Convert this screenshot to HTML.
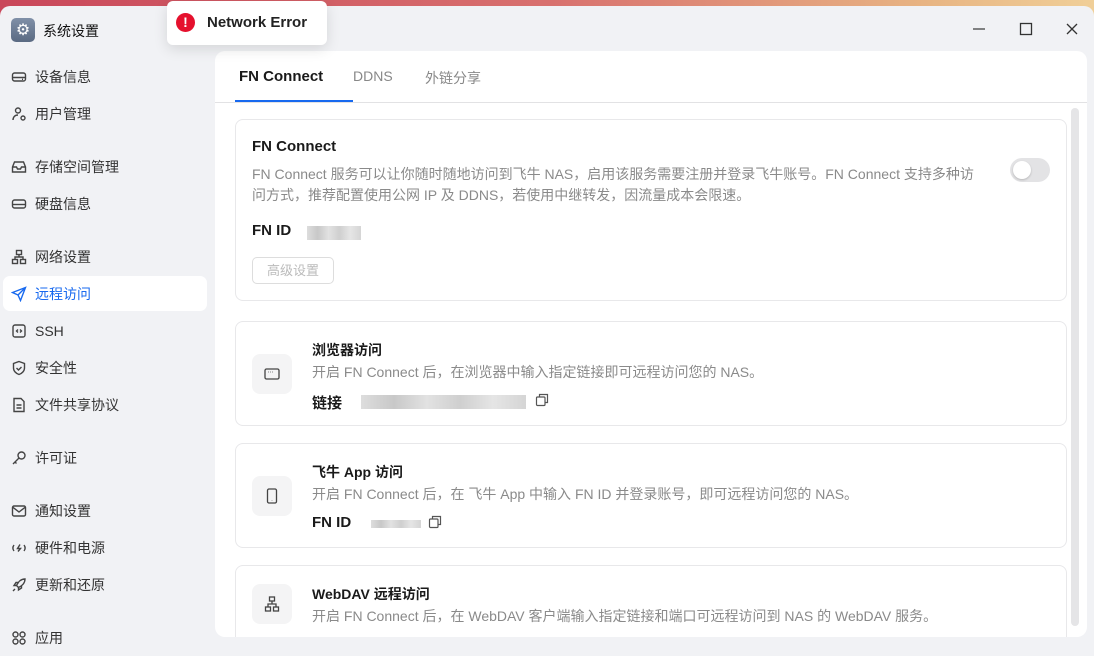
<!DOCTYPE html>
<html><head><meta charset="utf-8"><style>
*{box-sizing:border-box;margin:0;padding:0}
body{width:1094px;height:644px;overflow:hidden;position:relative;font-family:"Liberation Sans","Noto Sans CJK SC",sans-serif;background:linear-gradient(90deg,#c9475a 0%,#d8706e 50%,#e8b583 85%,#f0cf98 100%)}
.win{position:absolute;left:0;top:6px;width:1094px;height:650px;background:#f1f2f5;border-radius:10px 10px 0 0}
.abs{position:absolute}
.nav{position:absolute;left:11px;font-size:14px;color:#333;display:flex;align-items:center;height:20px}
.nav svg{width:16px;height:16px;margin-right:8px;fill:none;stroke:#444;stroke-width:1.4}
.panel{position:absolute;left:215px;top:51px;width:872px;height:586px;background:#fff;border-radius:10px;overflow:hidden}
.card{position:absolute;left:20px;width:832px;border:1px solid #e8e8ea;border-radius:8px;background:#fff}
.t{font-size:14px;font-weight:bold;color:#1a1a1a}
.d{font-size:14px;color:#8a8a8a;line-height:21px}
.ic{position:absolute;left:16px;width:40px;height:40px;background:#f4f4f5;border-radius:8px;display:flex;align-items:center;justify-content:center}
.ic svg{width:18px;height:18px;fill:none;stroke:#444;stroke-width:1.3}
.blur{display:inline-block;background:linear-gradient(90deg,#ddd,#c8c8c8,#e2e2e2,#cfcfcf,#e5e5e5,#d5d5d5);height:14px;vertical-align:middle}
</style></head><body>
<div class="win">
 <div class="abs" style="left:11px;top:12px;width:24px;height:24px;border-radius:5px;background:linear-gradient(#8090a8,#5a6a82);display:flex;align-items:center;justify-content:center;color:#fff;font-size:16px">⚙</div>
 <div class="abs" style="left:43px;top:15px;font-size:14px;color:#111">系统设置</div>
 <svg class="abs" style="left:972px;top:16px" width="14" height="14"><path d="M1 7h12" stroke="#444" stroke-width="1.3"/></svg>
 <svg class="abs" style="left:1019px;top:16px" width="14" height="14"><rect x="1.5" y="1.5" width="11" height="11" fill="none" stroke="#333" stroke-width="1.3"/></svg>
 <svg class="abs" style="left:1065px;top:16px" width="14" height="14"><path d="M2 2l10 10M12 2L2 12" stroke="#333" stroke-width="1.3"/></svg>
</div>
<div class="abs" style="left:3px;top:276px;width:204px;height:35px;background:#fff;border-radius:7px"></div>
<div class="nav" style="top:67px"><svg viewBox="0 0 16 16"><rect x="1.5" y="4" width="13" height="8" rx="2"/><path d="M1.5 8.5h13M11 10.3h1"/></svg>设备信息</div>
<div class="nav" style="top:104px"><svg viewBox="0 0 16 16"><circle cx="7" cy="4.5" r="2.5"/><path d="M2 14c0-3 2-5 5-5"/><circle cx="12" cy="12" r="2"/></svg>用户管理</div>
<div class="nav" style="top:157px"><svg viewBox="0 0 16 16"><path d="M1.5 8l2-5h9l2 5v5h-13z M1.5 8h4l1 2h3l1-2h4"/></svg>存储空间管理</div>
<div class="nav" style="top:194px"><svg viewBox="0 0 16 16"><rect x="1.5" y="4" width="13" height="8" rx="2"/><path d="M1.5 8.5h13"/></svg>硬盘信息</div>
<div class="nav" style="top:247px"><svg viewBox="0 0 16 16"><rect x="5.5" y="1.5" width="5" height="4"/><rect x="1.5" y="10.5" width="5" height="4"/><rect x="9.5" y="10.5" width="5" height="4"/><path d="M8 5.5v2.5M4 10.5V8h8v2.5"/></svg>网络设置</div>
<div class="nav" style="top:284px;color:#1769ef"><svg viewBox="0 0 16 16" style="stroke:#1769ef"><path d="M14.5 1.5L1.5 6.5l5.5 2.5 2.5 5.5z M7 9l7.5-7.5"/></svg>远程访问</div>
<div class="nav" style="top:321px"><svg viewBox="0 0 16 16"><rect x="2" y="2" width="12" height="12" rx="2"/><path d="M7 6.5L5.5 8 7 9.5M9 6.5l1.5 1.5L9 9.5"/></svg>SSH</div>
<div class="nav" style="top:358px"><svg viewBox="0 0 16 16"><path d="M8 1.5l5.5 2v4.5c0 3-2.5 5.5-5.5 6.5-3-1-5.5-3.5-5.5-6.5V3.5z M5.5 8l2 2 3-3"/></svg>安全性</div>
<div class="nav" style="top:395px"><svg viewBox="0 0 16 16"><path d="M3 1.5h7l3 3v10H3z M5.5 8h5M5.5 11h5"/></svg>文件共享协议</div>
<div class="nav" style="top:448px"><svg viewBox="0 0 16 16"><circle cx="10.5" cy="5.5" r="3.5"/><path d="M8 8l-6 6M4 12l1.5 1.5"/></svg>许可证</div>
<div class="nav" style="top:501px"><svg viewBox="0 0 16 16"><rect x="1.5" y="3" width="13" height="10" rx="1.5"/><path d="M1.5 4l6.5 5 6.5-5"/></svg>通知设置</div>
<div class="nav" style="top:538px"><svg viewBox="0 0 16 16"><path d="M3 5c-1.5 2-1.5 4 0 6M13 5c1.5 2 1.5 4 0 6M9 4.5L6.5 8.5h3L7 11.5"/></svg>硬件和电源</div>
<div class="nav" style="top:575px"><svg viewBox="0 0 16 16"><path d="M14 2c-4 0-7 3-8.5 6.5l2 2C11 9 14 6 14 2z M5.5 8.5H3l2-3h3 M7.5 10.5V13l3-2v-3 M4 12l-2 2"/></svg>更新和还原</div>
<div class="nav" style="top:628px"><svg viewBox="0 0 16 16"><circle cx="4.5" cy="4.5" r="2.5"/><circle cx="11.5" cy="4.5" r="2.5"/><circle cx="4.5" cy="11.5" r="2.5"/><circle cx="11.5" cy="11.5" r="2.5"/></svg>应用</div>

<div class="panel">
 <div class="abs" style="left:24px;top:17px;font-size:15px;font-weight:bold;color:#1a1a1a">FN Connect</div>
 <div class="abs" style="left:138px;top:17px;font-size:14px;color:#888">DDNS</div>
 <div class="abs" style="left:210px;top:17px;font-size:14px;color:#888">外链分享</div>
 <div class="abs" style="left:20px;top:49px;width:118px;height:3px;background:#1769ef"></div>
 <div class="abs" style="left:0;top:51px;width:872px;height:1px;background:#e2e2e4"></div>
 <div class="abs" style="left:856px;top:57px;width:8px;height:518px;background:#e5e5e7;border-radius:4px"></div>

 <div class="card" style="top:68px;height:182px">
  <div class="t abs" style="left:16px;top:18px;font-size:15px">FN Connect</div>
  <div class="d abs" style="left:16px;top:44px;width:732px">FN Connect 服务可以让你随时随地访问到飞牛 NAS，启用该服务需要注册并登录飞牛账号。FN Connect 支持多种访问方式，推荐配置使用公网 IP 及 DDNS，若使用中继转发，因流量成本会限速。</div>
  <div class="abs" style="left:774px;top:38px;width:40px;height:24px;border-radius:12px;background:#e3e3e5"><div style="position:absolute;left:3px;top:3px;width:18px;height:18px;border-radius:50%;background:#fff;box-shadow:0 1px 2px rgba(0,0,0,.2)"></div></div>
  <div class="t abs" style="left:16px;top:102px;font-size:15px">FN ID</div>
  <div class="abs" style="left:71px;top:104px"><span class="blur" style="width:54px"></span></div>
  <div class="abs" style="left:16px;top:137px;width:82px;height:27px;border:1px solid #ddd;border-radius:5px;font-size:13px;color:#bbb;text-align:center;line-height:25px">高级设置</div>
 </div>

 <div class="card" style="top:270px;height:105px">
  <div class="ic" style="top:32px"><svg viewBox="0 0 18 18"><rect x="2" y="4" width="14" height="10" rx="1.5"/><path d="M5 7h.5M7 7h.5M9 7h.5"/></svg></div>
  <div class="t abs" style="left:76px;top:18px">浏览器访问</div>
  <div class="d abs" style="left:76px;top:40px">开启 FN Connect 后，在浏览器中输入指定链接即可远程访问您的 NAS。</div>
  <div class="t abs" style="left:76px;top:70px;font-size:15px">链接</div>
  <div class="abs" style="left:125px;top:71px"><span class="blur" style="width:165px"></span></div>
  <svg class="abs" style="left:299px;top:71px" width="14" height="14" fill="none" stroke="#555" stroke-width="1.2"><rect x="1.5" y="4" width="8.5" height="8.5" rx="1"/><path d="M4.5 4V1.5h8v8H10"/></svg>
 </div>

 <div class="card" style="top:392px;height:105px">
  <div class="ic" style="top:32px"><svg viewBox="0 0 18 18"><rect x="4.5" y="2" width="9" height="14" rx="1.5"/><path d="M9 13.2v.3"/></svg></div>
  <div class="t abs" style="left:76px;top:18px">飞牛 App 访问</div>
  <div class="d abs" style="left:76px;top:40px">开启 FN Connect 后，在 飞牛 App 中输入 FN ID 并登录账号，即可远程访问您的 NAS。</div>
  <div class="t abs" style="left:76px;top:70px;font-size:15px">FN ID</div>
  <div class="abs" style="left:135px;top:71px"><span class="blur" style="width:50px;height:8px"></span></div>
  <svg class="abs" style="left:192px;top:71px" width="14" height="14" fill="none" stroke="#555" stroke-width="1.2"><rect x="1.5" y="4" width="8.5" height="8.5" rx="1"/><path d="M4.5 4V1.5h8v8H10"/></svg>
 </div>

 <div class="card" style="top:514px;height:105px">
  <div class="ic" style="top:18px"><svg viewBox="0 0 18 18"><rect x="6.5" y="2" width="5" height="4"/><rect x="2.5" y="12" width="5" height="4"/><rect x="10.5" y="12" width="5" height="4"/><path d="M9 6v3M5 12V9h8v3"/></svg></div>
  <div class="t abs" style="left:76px;top:18px">WebDAV 远程访问</div>
  <div class="d abs" style="left:76px;top:40px">开启 FN Connect 后，在 WebDAV 客户端输入指定链接和端口可远程访问到 NAS 的 WebDAV 服务。</div>
 </div>
</div>

<div class="abs" style="left:167px;top:1px;width:160px;height:44px;background:#fff;border-radius:6px;box-shadow:0 4px 14px rgba(0,0,0,.12)">
 <div class="abs" style="left:9px;top:12px;width:19px;height:19px;border-radius:50%;background:#e5102d;color:#fff;font-weight:bold;font-size:14px;text-align:center;line-height:19px">!</div>
 <div class="abs" style="left:40px;top:13px;font-size:15px;font-weight:bold;color:#222">Network Error</div>
</div>
</body></html>
